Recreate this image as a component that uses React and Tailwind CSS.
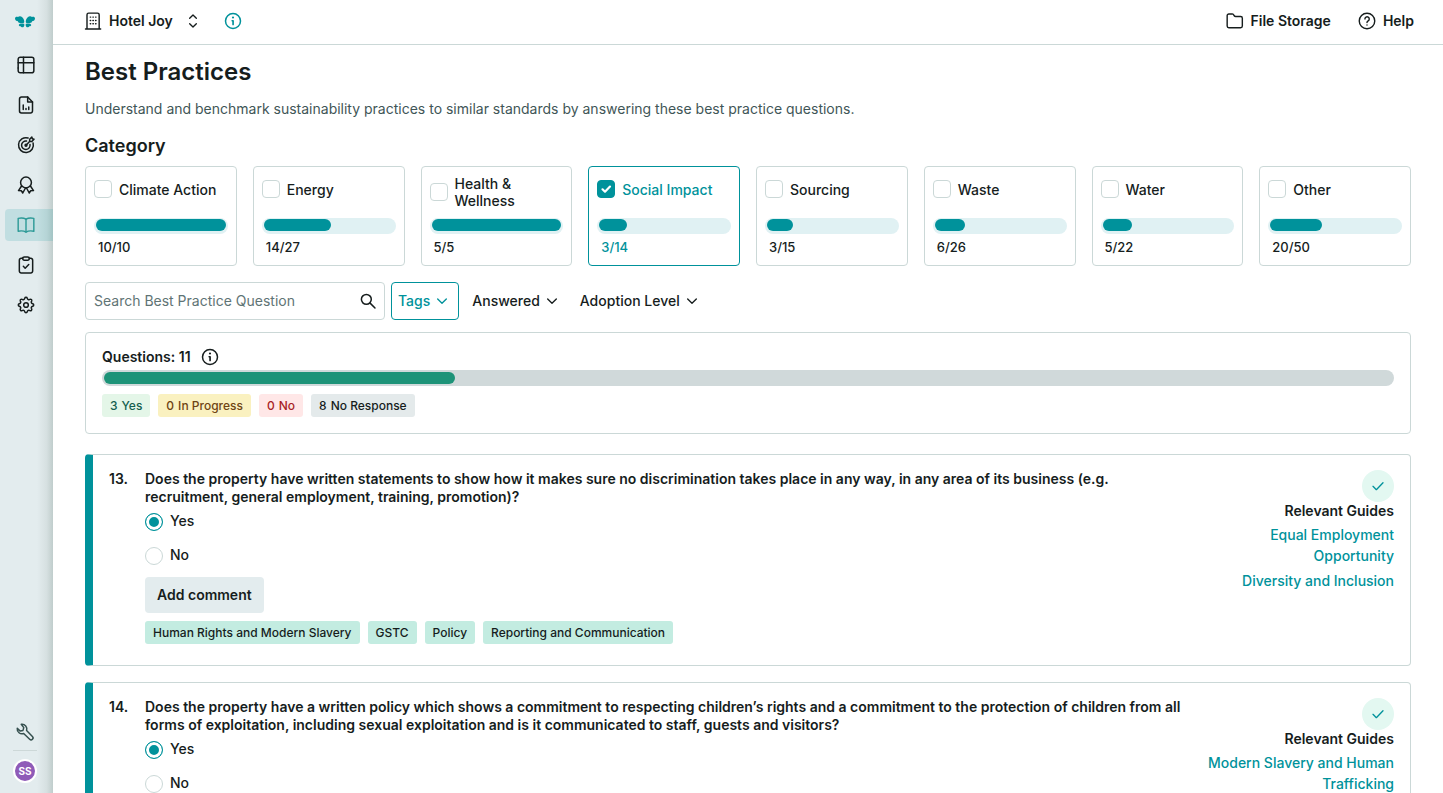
import { useState } from "react";

function Icon({ size = 20, width = 1.5, className = "", children }) {
  return (
    <svg
      width={size}
      height={size}
      viewBox="0 0 24 24"
      fill="none"
      stroke="currentColor"
      strokeWidth={width}
      strokeLinecap="round"
      strokeLinejoin="round"
      className={"shrink-0 " + className}
      aria-hidden="true"
    >
      {children}
    </svg>
  );
}

const Logo = () => (
  <svg width="20" height="12" viewBox="0 0 40 24" fill="#00929b" className="shrink-0" aria-hidden="true">
    <path d="M0 5C0 2 3 1 6 2 8 0 12 0 14.500 2.500 17 5 18.500 8 18.500 11.500 18.500 13.500 17.500 14 15.500 14H10C7.500 14 5.800 12.500 6 10.500 2.500 10.500 0 8 0 5Z" />
    <path d="M40 5C40 2 37 1 34 2 32 0 28 0 25.500 2.500 23 5 21.500 8 21.500 11.500 21.500 13.500 22.500 14 24.500 14H30C32.500 14 34.200 12.500 34 10.500 37.500 10.500 40 8 40 5Z" />
    <path d="M18.500 16C14 14.500 9 15.200 7.500 18 8 20.500 10 20.800 11.500 20.500 12 23 16 23.500 17.500 21.500 18.700 20 19 18 18.500 16Z" />
    <path d="M21.500 16C26 14.500 31 15.200 32.500 18 32 20.500 30 20.800 28.500 20.500 28 23 24 23.500 22.500 21.500 21.300 20 21 18 21.500 16Z" />
  </svg>
);

const TableIcon = () => (
  <Icon width={1.8}>
    <rect x="2.600" y="2.600" width="18.800" height="18.800" rx="2.500" />
    <path d="M9 2.600v18.800M2.600 9.300h18.800M2.600 15.700h0" />
  </Icon>
);
const ReportIcon = () => (
  <Icon width={1.8}>
    <path d="M14 2.500H6.500A2.300 2.300 0 0 0 4.200 4.800v14.400a2.300 2.300 0 0 0 2.300 2.300h11a2.300 2.300 0 0 0 2.300-2.300V8.300L14 2.500Z" />
    <path d="M14 2.500v5.800h5.800M8.700 12v5.500M12 16.200v1.300M15.300 14.500v3" />
  </Icon>
);
const TargetIcon = () => (
  <Icon width={1.8}>
    <path d="M14.500 3.600A8.900 8.900 0 1 0 20.500 9.600" />
    <path d="M12.600 7.300A5.100 5.100 0 1 0 16.800 11.400" />
    <path d="M12 12.200l4.600-4.600M16.400 7.700V5l2.600-2.600.6 2 2 .6L19 7.700h-2.600" />
    <circle cx="12" cy="12.300" r="1.100" />
  </Icon>
);
const AwardIcon = () => (
  <Icon width={1.8}>
    <circle cx="12" cy="9" r="6.500" />
    <path d="M6.700 13.200 3 18.700l3.500.3 1.600 2.600 3.300-6M17.300 13.200l3.700 5.500-3.500.3-1.600 2.600-3.300-6" />
  </Icon>
);
const BookIcon = () => (
  <Icon width={1.7}>
    <path d="M12 5C9.500 3.500 5.500 3.300 2.600 4v15.500c3-.7 6.900-.5 9.400 1 2.500-1.500 6.400-1.700 9.400-1V4C18.500 3.300 14.500 3.500 12 5Z" />
    <path d="M12 5v15.500" />
  </Icon>
);
const ClipboardIcon = () => (
  <Icon width={1.8}>
    <path d="M8 4H6.300A2.200 2.200 0 0 0 4 6.200v13.100a2.200 2.200 0 0 0 2.300 2.200h11.400a2.200 2.200 0 0 0 2.300-2.200V6.200A2.200 2.200 0 0 0 17.700 4H16" />
    <rect x="8" y="2.300" width="8" height="4" rx="2" />
    <path d="m8.800 13.600 2.200 2.200 4.300-4.300" />
  </Icon>
);
const GearIcon = () => (
  <Icon width={2.1}>
    <g transform="translate(1.800 1.600) scale(.85)">
      <path d="M10.200 2.600a1.900 1.900 0 0 1 3.600 0l.3.9a1.900 1.900 0 0 0 2.600 1.100l.8-.4a1.900 1.900 0 0 1 2.500 2.500l-.4.8a1.900 1.900 0 0 0 1.100 2.600l.9.300a1.900 1.900 0 0 1 0 3.600l-.9.300a1.900 1.900 0 0 0-1.100 2.600l.4.8a1.900 1.900 0 0 1-2.500 2.500l-.8-.4a1.900 1.900 0 0 0-2.600 1.100l-.3.900a1.900 1.900 0 0 1-3.600 0l-.3-.9a1.900 1.900 0 0 0-2.600-1.100l-.8.4A1.900 1.900 0 0 1 4 17.700l.4-.8a1.900 1.900 0 0 0-1.100-2.600l-.9-.3a1.900 1.900 0 0 1 0-3.600l.9-.3a1.900 1.900 0 0 0 1.100-2.600L4 6.700a1.900 1.900 0 0 1 2.500-2.500l.8.400a1.900 1.900 0 0 0 2.600-1.100Z" />
      <circle cx="12" cy="12.200" r="3.300" />
    </g>
  </Icon>
);
const WrenchIcon = () => (
  <Icon width={1.8}>
    <path d="M7.500 2.700a5.800 5.800 0 0 1 6.400 7.600l7 7a2.300 2.300 0 0 1-3.300 3.400l-7.200-6.900A5.800 5.800 0 0 1 2.700 7.600l3.600 3.300 3.300-.8.900-3.300-3-4.100Z" />
  </Icon>
);
const BuildingIcon = () => (
  <Icon width={1.7}>
    <path d="M4.800 21.600V4.500a2 2 0 0 1 2-2h10.600a2 2 0 0 1 2 2v17.100M3 21.600h18.200" />
    <path d="M8.700 7.300h.5M11.900 7.300h.5M15.100 7.300h.5M8.700 11.300h.5M11.900 11.300h.5M15.100 11.300h.5M8.700 15.300h.5M11.900 15.300h.5M15.100 15.300h.5" />
  </Icon>
);
const InfoIcon = () => (
  <Icon width={1.8}>
    <circle cx="12" cy="12" r="9" />
    <path d="M11 11.700h1.100v4.400" strokeWidth="2" />
    <path d="M12 7.800h.01" strokeWidth="2.600" />
  </Icon>
);
const FolderIcon = () => (
  <Icon width={1.7}>
    <path d="M2.600 18V5.500a2 2 0 0 1 2-2h3.900a2 2 0 0 1 1.700.9l.9 1.300a2 2 0 0 0 1.700.9h6a2 2 0 0 1 2 2V18a2 2 0 0 1-2 2H4.600a2 2 0 0 1-2-2Z" />
  </Icon>
);
const HelpIcon = () => (
  <Icon width={1.7}>
    <circle cx="12" cy="12" r="9.300" />
    <path d="M9.500 9.500a2.600 2.600 0 1 1 3.900 2.300c-.9.500-1.400 1-1.400 1.900M12 16.800h.01" />
  </Icon>
);
const ChevronDown = () => (
  <Icon size={16} width={2}>
    <path d="m5.500 9 6.500 6.500L18.500 9" />
  </Icon>
);

const NAV = [
  ["Dashboard", TableIcon],
  ["Reports", ReportIcon],
  ["Targets", TargetIcon],
  ["Awards", AwardIcon],
  ["Best Practices", BookIcon],
  ["Tasks", ClipboardIcon],
  ["Settings", GearIcon],
];

const CATEGORIES = [
  ["Climate Action", 10, 10],
  ["Energy", 14, 27],
  ["Health & Wellness", 5, 5],
  ["Social Impact", 3, 14],
  ["Sourcing", 3, 15],
  ["Waste", 6, 26],
  ["Water", 5, 22],
  ["Other", 20, 50],
];

const COUNTS = [
  [3, "Yes", "bg-[#e4f6e8] text-[#15604f]"],
  [0, "In Progress", "bg-[#faf1c0] text-[#6f4413]"],
  [0, "No", "bg-[#ffe7e7] text-[#a81f26]"],
  [8, "No Response", "bg-[#e4eaeb]"],
];

const QUESTIONS = [
  {
    number: 13,
    text: "Does the property have written statements to show how it makes sure no discrimination takes place in any way, in any area of its business (e.g. recruitment, general employment, training, promotion)?",
    guides: ["Equal Employment Opportunity", "Diversity and Inclusion"],
    tags: ["Human Rights and Modern Slavery", "GSTC", "Policy", "Reporting and Communication"],
  },
  {
    number: 14,
    text: "Does the property have a written policy which shows a commitment to respecting children’s rights and a commitment to the protection of children from all forms of exploitation, including sexual exploitation and is it communicated to staff, guests and visitors?",
    guides: ["Modern Slavery and Human Trafficking"],
    tags: [],
  },
];

function Sidebar() {
  return (
    <nav
      aria-label="Main"
      className="flex w-[53px] shrink-0 flex-col bg-[#e3ecee] bg-linear-to-r from-transparent from-70% via-[#d6e0e1] via-88% to-[#c0cdcc]"
    >
      <a href="#home" aria-label="Home" className="flex h-[43px] items-center justify-center pr-[3px]">
        <Logo />
      </a>
      <ul className="mt-1.5 flex flex-col gap-2 pl-[5px]">
        {NAV.map(([label, NavIcon]) => (
          <li key={label}>
            <a
              href={"#" + label.toLowerCase().replace(" ", "-")}
              aria-label={label}
              className={
                "flex h-8 items-center rounded-l pl-[11px] " +
                (label === "Best Practices" ? "bg-[#00929b]/15 text-[#2c9a97]" : "text-[#161d1d]")
              }
            >
              <NavIcon />
            </a>
          </li>
        ))}
      </ul>
      <div className="mt-auto flex flex-col items-center pr-[3px] pb-2.5">
        <button type="button" aria-label="Tools" className="text-[#36504f]">
          <WrenchIcon />
        </button>
        <hr className="mt-2 w-6 border-[#cdd8d8]" />
        <button
          type="button"
          className="mt-2 flex size-6 items-center justify-center rounded-full border-2 border-white bg-[#8f5bb8] text-[10px] font-bold text-white"
        >
          SS
        </button>
      </div>
    </nav>
  );
}

function Header() {
  return (
    <header className="flex h-[45px] shrink-0 items-center border-b border-[#cbd8d7] pr-[29px] pb-0.5 pl-[30px] text-sm font-semibold">
      <button type="button" className="flex items-center">
        <BuildingIcon />
        <span className="ml-1.5">Hotel Joy</span>
        <Icon size={16} width={2} className="ml-3">
          <path d="m7 8 5-5 5 5M7 16l5 5 5-5" />
        </Icon>
      </button>
      <button type="button" aria-label="About this property" className="ml-[22px] text-[#00929b]">
        <InfoIcon />
      </button>
      <a href="#files" className="ml-auto flex items-center gap-1.5">
        <FolderIcon />
        File Storage
      </a>
      <a href="#help" className="ml-[26px] flex items-center gap-1.5">
        <HelpIcon />
        Help
      </a>
    </header>
  );
}

function CategoryCard({ name, done, total, checked, onToggle }) {
  return (
    <label
      className={
        "flex h-[100px] flex-col rounded border px-2 pt-2 text-sm font-medium " +
        (checked ? "border-[#00929b] text-[#00929b]" : "border-[#cbd8d7]")
      }
    >
      <span className="flex h-[43px] shrink-0 items-start">
        <span className="flex min-h-7 items-center gap-[7px] leading-[17px]">
          <span className="relative flex shrink-0">
            <input
              type="checkbox"
              checked={checked}
              onChange={onToggle}
              className="size-[18px] appearance-none rounded border border-[#cbd8d7] bg-white checked:border-[#00929b] checked:bg-[#00929b]"
            />
            {checked && (
              <svg viewBox="0 0 18 18" className="pointer-events-none absolute inset-0 size-[18px]" aria-hidden="true">
                <path d="m5.500 9.300 2.500 2.400L13 6.600" fill="none" stroke="#fff" strokeWidth="2.200" strokeLinecap="round" strokeLinejoin="round" />
              </svg>
            )}
          </span>
          <span>{name}</span>
        </span>
      </span>
      <span className="flex h-4 rounded-full bg-[#e0f1f3] px-0.5 pt-px">
        <span className="h-3 rounded-full bg-[#00929b]" style={{ width: (done / total) * 100 + "%" }} />
      </span>
      <span className="mt-1 ml-1 text-[13px] leading-[18px]">
        {done}/{total}
      </span>
    </label>
  );
}

function QuestionCard({ number, text, guides, tags }) {
  const [answer, setAnswer] = useState("Yes");
  return (
    <article className="flex min-h-[212px] rounded border border-l-8 border-[#cbd8d7] border-l-[#00929b] pt-[15px] pr-4 pb-5 pl-4 text-sm">
      <span className="w-9 shrink-0 leading-[18px] font-semibold">{number}.</span>
      <div className="min-w-0 flex-1">
        <fieldset>
          <legend className="leading-[18px] font-semibold">{text}</legend>
          <div className="mt-[7px] flex flex-col gap-4">
            {["Yes", "No"].map((option) => (
              <label key={option} className="flex h-[18px] items-start gap-[7px] leading-4 font-medium">
                <input
                  type="radio"
                  name={"q" + number}
                  checked={answer === option}
                  onChange={() => setAnswer(option)}
                  className="size-[18px] appearance-none rounded-full border border-[#cbd8d7] bg-white checked:border-[#00929b] checked:bg-[#00929b] checked:shadow-[inset_0_0_0_3px_#fff]"
                />
                {option}
              </label>
            ))}
          </div>
        </fieldset>
        <button type="button" className="mt-3 flex h-9 items-center rounded bg-[#e3ecee] px-3 font-semibold">
          Add comment
        </button>
        {tags.length > 0 && (
          <ul className="mt-2 flex flex-wrap gap-2 text-xs font-medium">
            {tags.map((tag) => (
              <li key={tag} className="flex h-[23px] items-center rounded-[3px] bg-[#c3ece1] px-2">
                {tag}
              </li>
            ))}
          </ul>
        )}
      </div>
      <aside className="flex w-[200px] shrink-0 flex-col items-end text-right">
        <span className="flex size-8 items-center justify-center rounded-full bg-[#e3f8f1] text-[#00929b]">
          <Icon size={16} width={2}>
            <path d="m4.500 12.500 5 5L19.500 7" />
          </Icon>
        </span>
        <h3 className="leading-[18px] font-semibold">Relevant Guides</h3>
        <ul className="mt-1 flex flex-col gap-1 leading-[21px] font-medium text-[#00929b]">
          {guides.map((guide) => (
            <li key={guide}>
              <a href="#guide">{guide}</a>
            </li>
          ))}
        </ul>
      </aside>
    </article>
  );
}

export default function App() {
  const [selected, setSelected] = useState(["Social Impact"]);
  const toggle = (name) =>
    setSelected((now) => (now.includes(name) ? now.filter((n) => n !== name) : [...now, name]));

  return (
    <div className="flex h-screen bg-white font-['Inter',sans-serif] text-[#161d1d]">
      <Sidebar />
      <div className="flex min-w-0 flex-1 flex-col">
        <Header />
        <main className="min-h-0 flex-1 overflow-y-auto px-8 pt-[11px]">
          <h1 className="text-2xl leading-8 font-semibold">Best Practices</h1>
          <p className="mt-[11px] text-sm leading-5 text-[#3f5657]">
            Understand and benchmark sustainability practices to similar standards by answering these best practice questions.
          </p>
          <h2 className="mt-[15px] text-lg leading-6 font-semibold">Category</h2>
          <div className="mt-2 grid grid-cols-8 gap-4">
            {CATEGORIES.map(([name, done, total]) => (
              <CategoryCard
                key={name}
                name={name}
                done={done}
                total={total}
                checked={selected.includes(name)}
                onToggle={() => toggle(name)}
              />
            ))}
          </div>

          <div className="mt-4 flex h-[38px] gap-1.5 text-sm font-medium">
            <div className="flex w-[300px] items-center rounded border border-[#cbd8d7] pr-[7px] pl-2">
              <input
                type="search"
                aria-label="Search Best Practice Question"
                placeholder="Search Best Practice Question"
                className="min-w-0 flex-1 font-normal outline-none placeholder:text-[#5f7475]"
              />
              <button type="button" aria-label="Search">
                <Icon size={18} width={2}>
                  <circle cx="9.800" cy="9.800" r="6.600" />
                  <path d="m14.800 14.800 6.500 6.500" />
                </Icon>
              </button>
            </div>
            <button type="button" className="flex items-center gap-1 rounded border border-[#00929b] pr-2 pl-1.5 text-[#00929b]">
              Tags
              <ChevronDown />
            </button>
            <button type="button" className="flex items-center gap-1 px-[7px]">
              Answered
              <ChevronDown />
            </button>
            <button type="button" className="flex items-center gap-1 px-[7px]">
              Adoption Level
              <ChevronDown />
            </button>
          </div>

          <section className="mt-3 h-[102px] rounded border border-[#cbd8d7] px-4 pt-[15px]">
            <div className="flex h-[18px] items-center gap-[9px] text-sm font-semibold">
              <h2>Questions: 11</h2>
              <button type="button" aria-label="About the question count">
                <InfoIcon />
              </button>
            </div>
            <div className="mt-1 flex h-4 items-center rounded-full bg-[#d0d9da] px-0.5">
              <div className="h-3 rounded-full bg-[#1d9378]" style={{ width: (3 / 11) * 100 + "%" }} />
            </div>
            <ul className="mt-2 flex gap-2 text-xs font-medium">
              {COUNTS.map(([count, label, tone]) => (
                <li key={label} className={"flex h-[23px] items-center gap-1 rounded-[3px] px-2 " + tone}>
                  <span>{count}</span>
                  <span>{label}</span>
                </li>
              ))}
            </ul>
          </section>

          <div className="mt-5 flex flex-col gap-4">
            {QUESTIONS.map((question) => (
              <QuestionCard key={question.number} {...question} />
            ))}
          </div>
        </main>
      </div>
    </div>
  );
}
